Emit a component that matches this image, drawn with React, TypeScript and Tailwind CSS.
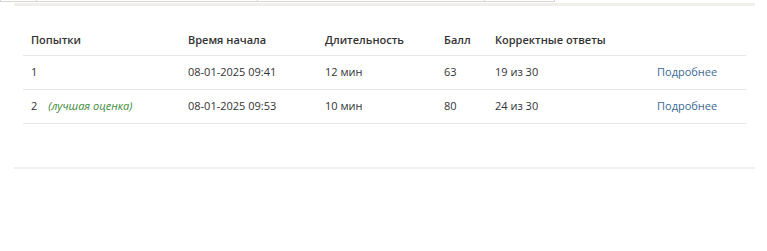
const attempts = [
  { n: "1", best: false, start: "08-01-2025 09:41", dur: "12 мин", score: "63", correct: "19 из 30" },
  { n: "2", best: true, start: "08-01-2025 09:53", dur: "10 мин", score: "80", correct: "24 из 30" },
];

export default function App() {
  return (
    <div className="h-[251px] w-[767px] bg-white text-[11px] text-[#333] font-['Open_Sans',sans-serif]">
      {/* cropped tab strip */}
      <div className="flex h-[2px] w-[556px]">
        <div className="w-[37px] border-x border-b border-[#d9d5d2]" />
        <div className="w-[221px] border-r border-b border-[#d9d5d2]" />
        <div className="w-[227px] border-r border-b border-[#d9d5d2]" />
        <div className="w-[70px] border-r border-b border-[#d9d5d2]" />
      </div>
      <div className="mx-[14px] mt-px w-[741px] border-t-[3px] border-[#f0efeb] pt-[21px] pb-[43px]">
        <table className="ml-[9px] w-[723px] table-fixed border-collapse">
          <colgroup>
            <col className="w-[157px]" />
            <col className="w-[137px]" />
            <col className="w-[119px]" />
            <col className="w-[51px]" />
            <col className="w-[162px]" />
            <col className="w-[97px]" />
          </colgroup>
          <thead>
            <tr className="h-[28px] border-b border-[#e6e6e6] text-left">
              <th className="px-2 pb-px font-semibold">Попытки</th>
              <th className="px-2 pb-px font-semibold">Время начала</th>
              <th className="px-2 pb-px font-semibold">Длительность</th>
              <th className="px-2 pb-px font-semibold">Балл</th>
              <th className="px-2 pb-px font-semibold">Корректные ответы</th>
              <th className="px-2 pb-px" />
            </tr>
          </thead>
          <tbody>
            {attempts.map((a) => (
              <tr key={a.n} className="h-[34px] border-b border-[#e6e6e6]">
                <td className="px-2">
                  {a.n}
                  {a.best && <span className="ml-[11px] italic text-[#3b8a36]">(лучшая оценка)</span>}
                </td>
                <td className="px-2">{a.start}</td>
                <td className="px-2">{a.dur}</td>
                <td className="px-2">{a.score}</td>
                <td className="px-2">{a.correct}</td>
                <td className="px-2">
                  <a href="#" className="text-[#3a6a94]">Подробнее</a>
                </td>
              </tr>
            ))}
          </tbody>
        </table>
      </div>
      <div className="mx-[14px] h-[2px] w-[741px] bg-[#efefed]" />
    </div>
  );
}
